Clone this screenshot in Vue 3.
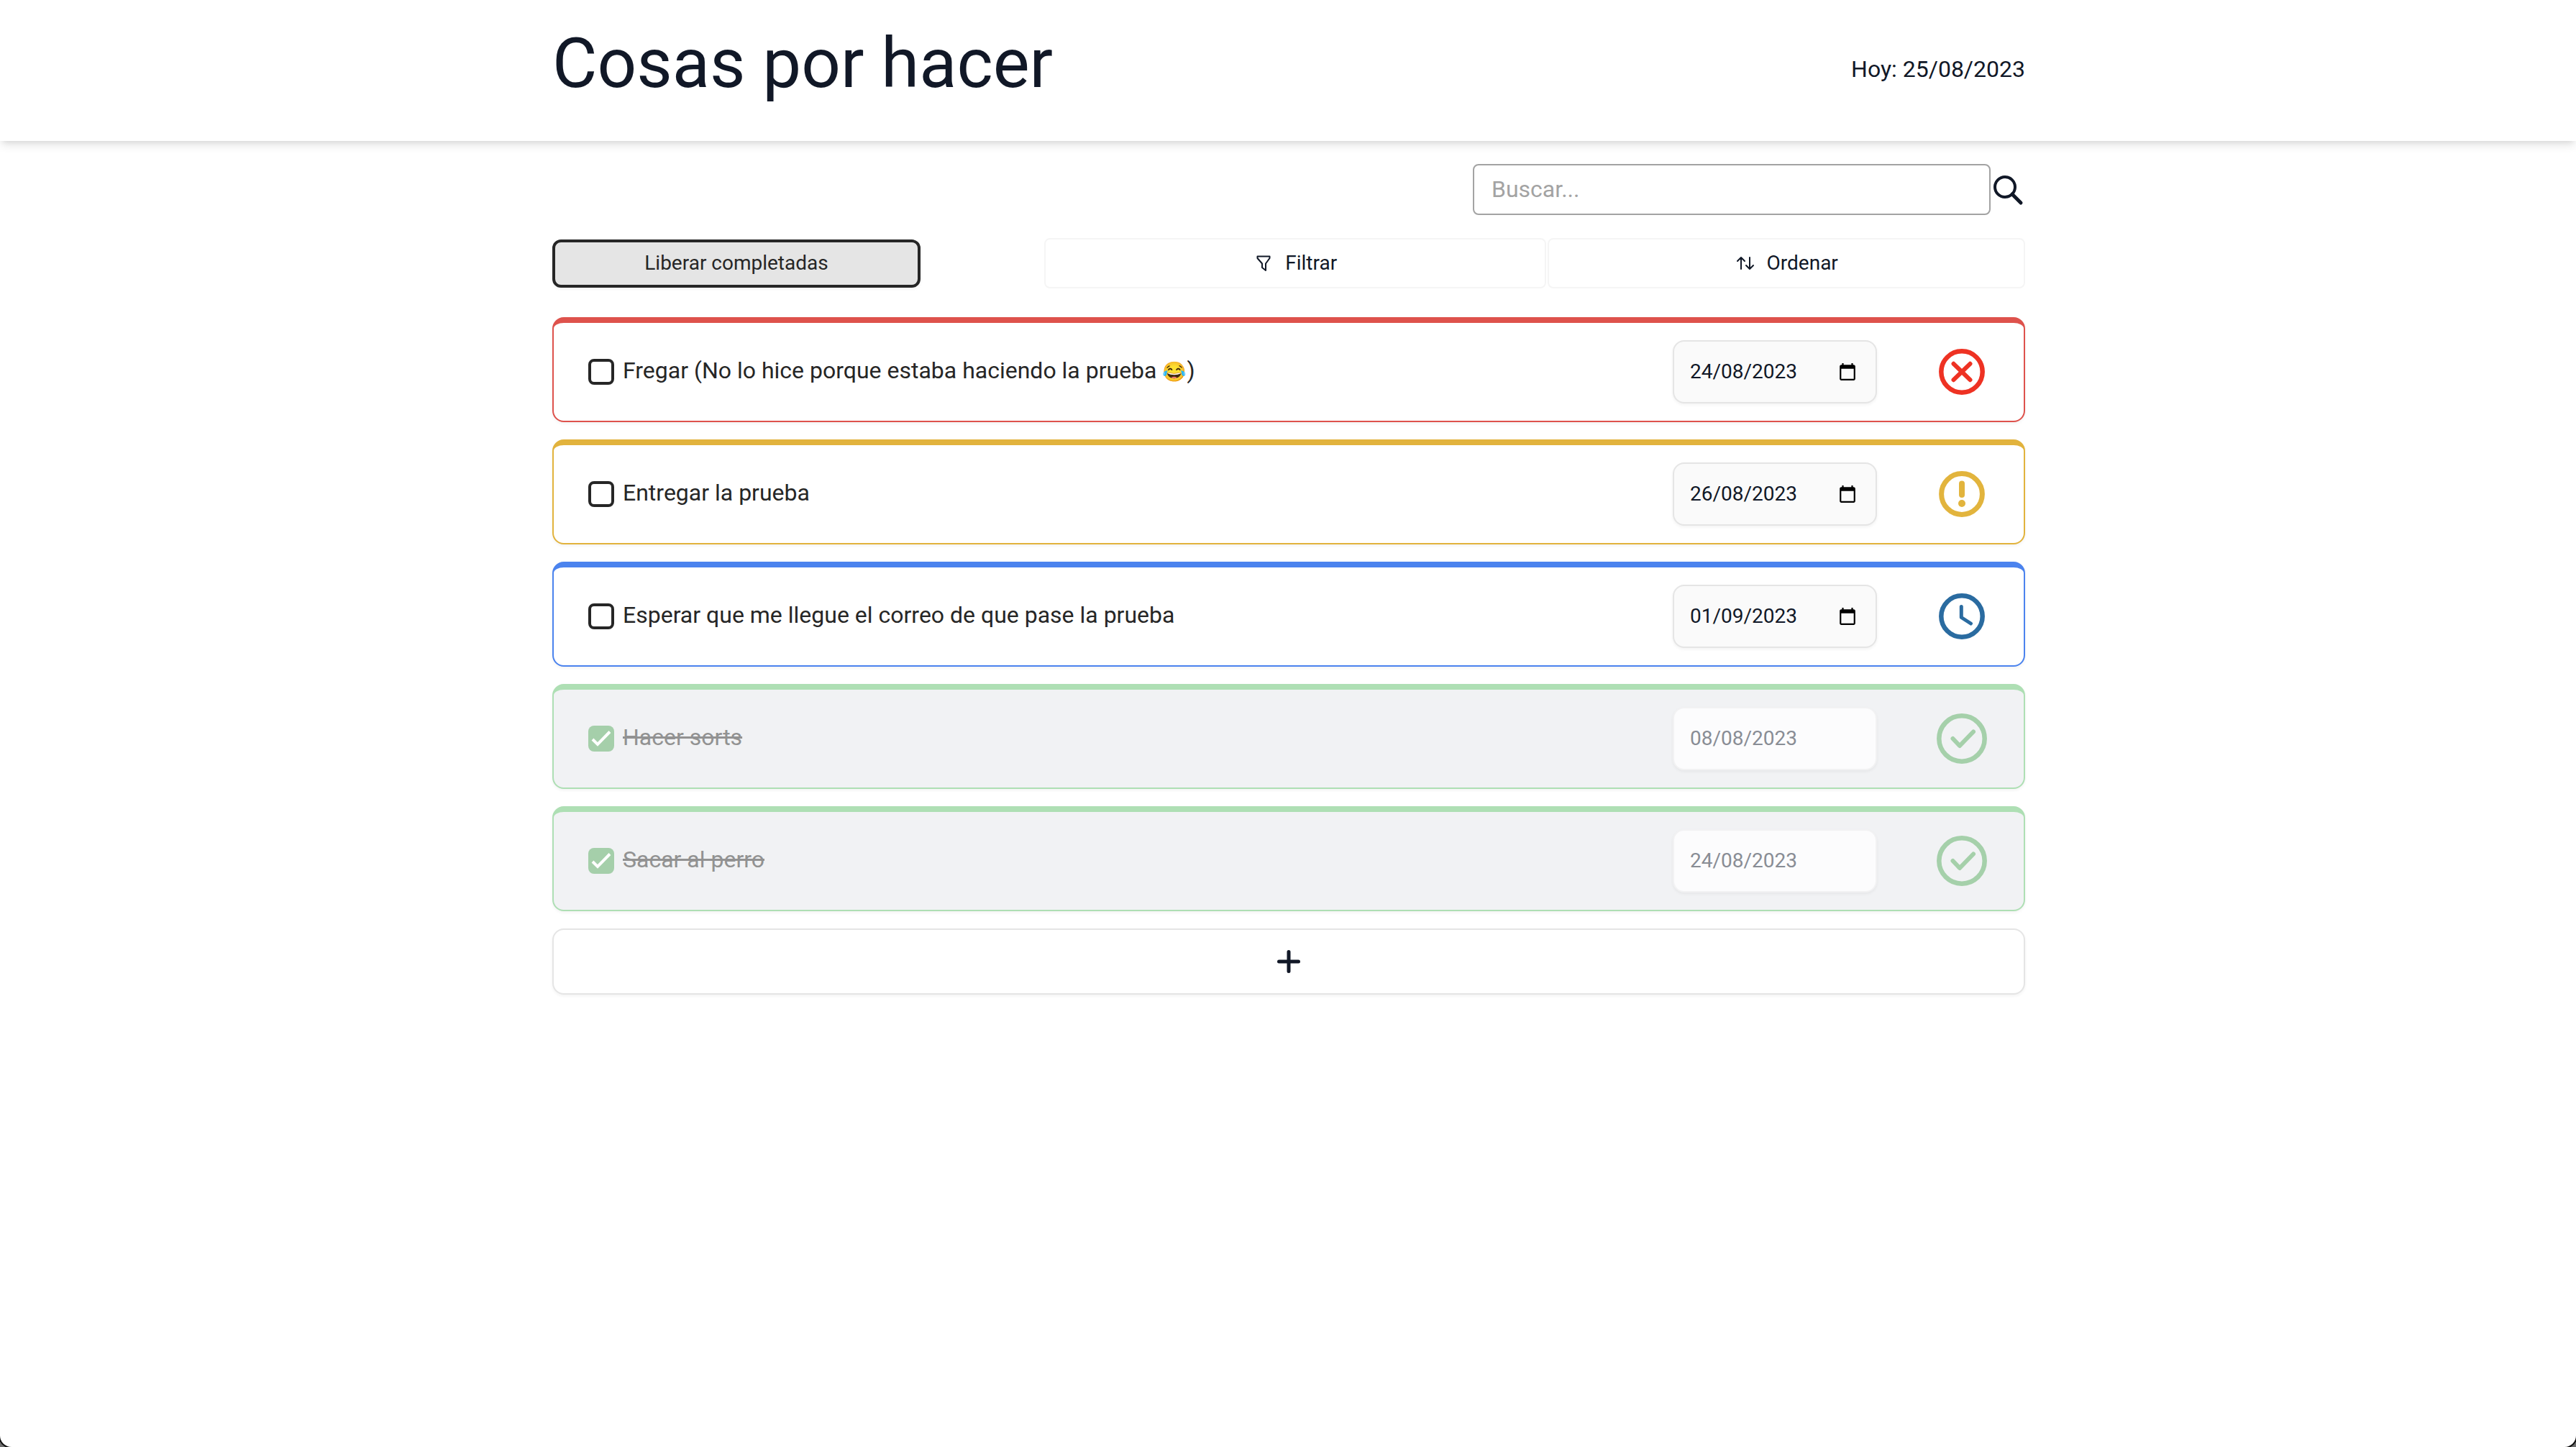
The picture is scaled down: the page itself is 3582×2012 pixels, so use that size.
<script setup>
import { ref } from 'vue'

const search = ref('')
const tasks = ref([
  { id: 1, text: 'Fregar (No lo hice porque estaba haciendo la prueba 😂)', date: '24/08/2023', status: 'late', done: false },
  { id: 2, text: 'Entregar la prueba', date: '26/08/2023', status: 'soon', done: false },
  { id: 3, text: 'Esperar que me llegue el correo de que pase la prueba', date: '01/09/2023', status: 'pending', done: false },
  { id: 4, text: 'Hacer sorts', date: '08/08/2023', status: 'done', done: true },
  { id: 5, text: 'Sacar al perro', date: '24/08/2023', status: 'done', done: true },
])

// Emoji glyphs are wider than the letters, so they get their own smaller span.
const emoji = /(\p{Extended_Pictographic})/u
const parts = (text) => text.split(emoji).filter(Boolean)
</script>

<template>
  <div class="page">
    <header class="header">
      <div class="container header-row">
        <h1>Cosas por hacer</h1>
        <p class="today">Hoy: 25/08/2023</p>
      </div>
    </header>

    <main class="container">
      <form class="search" @submit.prevent>
        <input v-model="search" type="text" placeholder="Buscar..." aria-label="Buscar" />
        <button type="submit" class="search-button" aria-label="Buscar">
          <svg viewBox="0 0 48 48" fill="none" stroke="currentColor">
            <circle cx="20" cy="20" r="14" stroke-width="4" />
            <path d="M30 30L42 42" stroke-width="5" stroke-linecap="round" />
          </svg>
        </button>
      </form>

      <div class="toolbar">
        <button type="button" class="release">Liberar completadas</button>
        <div class="tools">
          <button type="button" class="tool filter">
            <svg viewBox="0 0 28 28" fill="none" stroke="currentColor" stroke-width="2" stroke-linejoin="round">
              <path d="M5.500 4.500H22.500V7L17 14.500V24L12 20V14.500L5.500 7Z" />
            </svg>
            Filtrar
          </button>
          <button type="button" class="tool sort">
            <svg viewBox="0 0 28 28" fill="none" stroke="currentColor" stroke-width="2" stroke-linecap="round" stroke-linejoin="round">
              <path d="M8 22V6M3 11L8 6L13 11M20 6V22M15 17L20 22L25 17" />
            </svg>
            Ordenar
          </button>
        </div>
      </div>

      <ul class="tasks">
        <li v-for="task in tasks" :key="task.id" class="task" :class="task.status">
          <div class="task-name">
            <input :id="'task-' + task.id" v-model="task.done" type="checkbox" class="check" />
            <label :for="'task-' + task.id"><template v-for="(part, i) in parts(task.text)" :key="i"><span v-if="emoji.test(part)" class="emoji">{{ part }}</span><template v-else>{{ part }}</template></template></label>
          </div>
          <div class="date">
            <input v-model="task.date" type="text" :disabled="task.done" :aria-label="'Fecha de ' + task.text" />
            <button v-if="!task.done" type="button" aria-label="Abrir calendario">
              <svg viewBox="0 0 24 24" fill="currentColor">
                <path d="M20 3h-1V1h-2v2H7V1H5v2H4c-1.100 0-2 .9-2 2v16c0 1.100.9 2 2 2h16c1.100 0 2-.9 2-2V5c0-1.100-.9-2-2-2zm0 18H4V8h16v13z" />
              </svg>
            </button>
          </div>
          <svg class="status" viewBox="0 0 72 72" fill="none" stroke="currentColor" stroke-linecap="round">
            <template v-if="task.status === 'late'">
              <circle cx="36" cy="36" r="28.700" stroke-width="6.500" />
              <path d="M24.500 24.800L47.500 47.200M47.500 24.800L24.500 47.200" stroke-width="6" />
            </template>
            <template v-else-if="task.status === 'soon'">
              <circle cx="36" cy="36" r="28.400" stroke-width="7" />
              <path d="M36 21.500V37" stroke-width="8" />
              <circle cx="36" cy="49" r="5" fill="currentColor" stroke="none" />
            </template>
            <template v-else-if="task.status === 'pending'">
              <circle cx="36" cy="36" r="28.700" stroke-width="6.500" />
              <path d="M35.300 22.500V37.500L48.500 46" stroke-width="5" stroke-linejoin="round" />
            </template>
            <template v-else>
              <circle cx="36" cy="36" r="31.700" stroke-width="6.500" />
              <path d="M23.500 36L33 46L52 26.500" stroke-width="6" stroke-linejoin="round" />
            </template>
          </svg>
        </li>
      </ul>

      <button type="button" class="add" aria-label="Agregar tarea">
        <svg viewBox="0 0 48 48" fill="none" stroke="currentColor" stroke-width="5" stroke-linecap="round">
          <path d="M24 10.500V37.500M10.500 24H37.500" />
        </svg>
      </button>
    </main>
  </div>
</template>

<style>
html {
  background: #6e6e6e;
}
</style>

<style scoped>
.page {
  min-height: 100vh;
  background: #fff;
  border-radius: 0 0 16px 16px;
  box-shadow: 0 0 0 2px #111;
  color: #111827;
  font-family: Roboto, sans-serif;
  font-size: 32px;
  line-height: 48px;
}

.page *,
.page {
  box-sizing: border-box;
}

button,
input {
  font: inherit;
  color: inherit;
}

button {
  padding: 0;
  border: 0;
  background: none;
}

svg {
  display: block;
  flex: none;
}

.container {
  width: 100%;
  max-width: 2050px;
  margin: 0 auto;
  padding-left: 2px;
}

.header {
  padding: 40px 0 44px;
  background: #fff;
  box-shadow: 0 8px 12px -2px rgb(0 0 0 / 0.1), 0 4px 8px -4px rgb(0 0 0 / 0.1);
}

.header-row {
  display: flex;
  align-items: center;
  justify-content: space-between;
}

h1 {
  margin: 0 0 16px;
  font-size: 96px;
  line-height: 96px;
  font-weight: 400;
}

.today {
  margin: 0;
}

.search {
  display: flex;
  align-items: center;
  justify-content: flex-end;
  margin-top: 32px;
}

.search input {
  width: 720px;
  height: 71px;
  padding: 0 24px 2px;
  border: 2px solid #a3a3a3;
  border-radius: 8px;
  background: #fff;
}

.search input::placeholder {
  color: #a3a3a3;
}

.search-button svg {
  width: 48px;
  height: 48px;
}

.toolbar {
  display: flex;
  align-items: center;
  justify-content: space-between;
  margin: 32px 0 40px;
  font-size: 28px;
  line-height: 40px;
}

.release {
  width: 25%;
  height: 67px;
  border: 4px solid #262626;
  border-radius: 12px;
  background: #e5e5e5;
  box-shadow: 0 2px 4px rgb(0 0 0 / 0.05);
  color: #262626;
}

.tools {
  display: flex;
  gap: 2px;
  width: 66.6%;
}

.tool {
  display: flex;
  align-items: center;
  justify-content: center;
  gap: 16px;
  height: 70px;
  border: 2px solid #f5f5f5;
  border-radius: 8px;
}

.tool svg {
  width: 28px;
  height: 28px;
}

.filter {
  flex: 699 1 0;
}

.sort {
  flex: 664 1 0;
}

.tasks {
  display: flex;
  flex-direction: column;
  gap: 24px;
  margin: 0 0 24px;
  padding: 0;
  list-style: none;
}

.task {
  display: flex;
  align-items: center;
  padding: 24px 50px 24px 48px;
  border: 2px solid;
  border-top-width: 8px;
  border-radius: 16px;
  background: #fff;
  box-shadow: 0 2px 4px rgb(0 0 0 / 0.05);
}

.task.late {
  border-color: #de524c;
}

.task.soon {
  border-color: #e2b33d;
}

.task.pending {
  border-color: #4b83ee;
}

.task.done {
  border-color: #aedfb4;
  background: #f1f2f4;
}

.task-name {
  display: flex;
  flex: 1;
  align-items: center;
  gap: 12px;
  color: #262626;
}

.task-name label {
  padding-bottom: 4px;
}

.emoji {
  font-size: 27px;
  line-height: 32px;
}

.done .task-name {
  color: #929292;
  text-decoration: line-through;
}

.check {
  appearance: none;
  width: 36px;
  height: 36px;
  margin: 0;
  border: 4px solid #262626;
  border-radius: 8px;
}

.check:checked {
  border: 0;
  background: #a5cfaa url("data:image/svg+xml,%3Csvg xmlns='http://www.w3.org/2000/svg' viewBox='0 0 36 36' fill='none' stroke='white' stroke-width='4'%3E%3Cpath d='M6 19L13 26L30 8.500'/%3E%3C/svg%3E") center / 36px;
}

.date {
  display: flex;
  align-items: center;
  justify-content: space-between;
  width: 284px;
  height: 88px;
  margin-right: 82px;
  padding: 0 26px 0 22px;
  border: 2px solid #e5e5e5;
  border-radius: 16px;
  background: #fafafa;
  box-shadow: 0 2px 4px rgb(0 0 0 / 0.05);
  font-size: 28px;
  line-height: 40px;
}

.date input {
  width: 180px;
  padding: 0;
  border: 0;
  background: none;
}

.date button {
  color: #000;
}

.date button svg {
  width: 26px;
  height: 26px;
}

.done .date {
  border-color: #f2f2f3;
  background: #fcfcfd;
  color: #898d95;
}

.status {
  width: 72px;
  height: 72px;
}

.late .status {
  color: #ee3223;
}

.soon .status {
  color: #e2b43d;
}

.pending .status {
  color: #2a6ba0;
}

.done .status {
  color: #a5d0aa;
}

.add {
  display: flex;
  align-items: center;
  justify-content: center;
  width: 100%;
  height: 92px;
  border: 2px solid #e5e5e5;
  border-radius: 16px;
  background: #fff;
  box-shadow: 0 2px 4px rgb(0 0 0 / 0.05);
}

.add svg {
  width: 48px;
  height: 48px;
}
</style>
